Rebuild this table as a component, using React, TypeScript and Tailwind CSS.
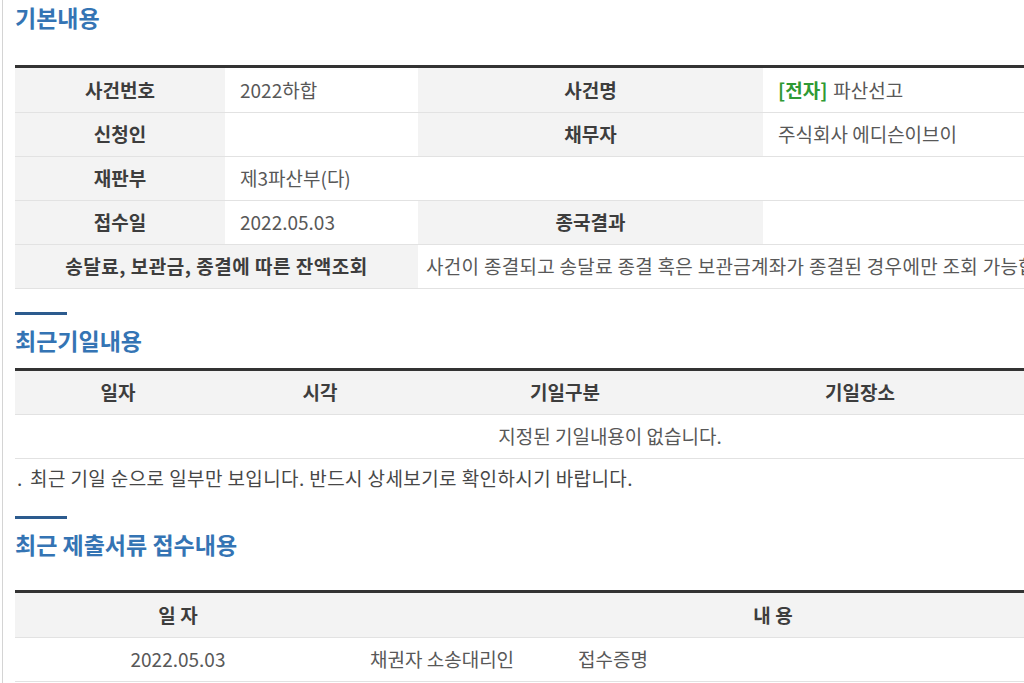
import React from "react";

const F = { fontFamily: '"Noto Sans CJK KR", "Noto Sans", sans-serif' } as const;

function Label({ w, children, className = "" }: { w: string; children?: React.ReactNode; className?: string }) {
  return (
    <div className={`${w} shrink-0 bg-[#f3f3f3] flex items-center justify-center font-bold text-[#3d3d3d] ${className}`}>
      {children}
    </div>
  );
}

function Value({ w, children, className = "" }: { w: string; children?: React.ReactNode; className?: string }) {
  return (
    <div className={`${w} shrink-0 bg-white flex items-center text-[#585858] ${className}`}>{children}</div>
  );
}

function SectionTitle({ children }: { children: React.ReactNode }) {
  return (
    <div>
      <div className="w-[52px] h-[3px] bg-[#2c5b8e]" />
      <div className="mt-[10px] h-[30px] leading-[30px] text-[23px] font-bold text-[#3474b4]">{children}</div>
    </div>
  );
}

export default function App() {
  return (
    <div className="w-[1024px] h-[683px] overflow-hidden bg-white" style={F}>
      <div className="ml-[2px] border-l border-[#d4d4d4] pl-[12px] h-full text-[19px]">
        {/* 기본내용 */}
        <div className="pt-[2px] h-[32px] leading-[30px] text-[23px] font-bold text-[#3474b4]">기본내용</div>
        <div className="mt-[33px] w-[1190px] border-t-[3px] border-[#333]">
          <div className="flex h-[45px] border-b border-[#e2e2e2]">
            <Label w="w-[210px]">사건번호</Label>
            <Value w="w-[193px]" className="pl-[15px]">2022하합</Value>
            <Label w="w-[345px]">사건명</Label>
            <Value w="w-[442px]" className="pl-[15px]">
              <span className="text-[#2f9a34] font-bold">[전자]</span>
              <span className="ml-[6px]">파산선고</span>
            </Value>
          </div>
          <div className="flex h-[44px] border-b border-[#e2e2e2]">
            <Label w="w-[210px]">신청인</Label>
            <Value w="w-[193px]" className="pl-[15px]"></Value>
            <Label w="w-[345px]">채무자</Label>
            <Value w="w-[442px]" className="pl-[15px]">주식회사 에디슨이브이</Value>
          </div>
          <div className="flex h-[44px] border-b border-[#e2e2e2]">
            <Label w="w-[210px]">재판부</Label>
            <Value w="w-[980px]" className="pl-[15px]">제3파산부(다)</Value>
          </div>
          <div className="flex h-[44px] border-b border-[#e2e2e2]">
            <Label w="w-[210px]">접수일</Label>
            <Value w="w-[193px]" className="pl-[15px]">2022.05.03</Value>
            <Label w="w-[345px]">종국결과</Label>
            <Value w="w-[442px]" className="pl-[15px]"></Value>
          </div>
          <div className="flex h-[44px] border-b border-[#e2e2e2]">
            <Label w="w-[403px]" className="tracking-[0.5px]">송달료, 보관금, 종결에 따른 잔액조회</Label>
            <Value w="w-[787px]" className="pl-[8px] whitespace-nowrap tracking-[0.3px]">
              사건이 종결되고 송달료 종결 혹은 보관금계좌가 종결된 경우에만 조회 가능합니다.
            </Value>
          </div>
        </div>

        {/* 최근기일내용 */}
        <div className="mt-[23px]">
          <SectionTitle>최근기일내용</SectionTitle>
        </div>
        <div className="mt-[13px] w-[1190px] border-t-[3px] border-[#333]">
          <div className="flex h-[44px] bg-[#f3f3f3] border-b border-[#e2e2e2] font-bold text-[#3d3d3d]">
            <div className="w-[206px] flex items-center justify-center">일자</div>
            <div className="w-[198px] flex items-center justify-center">시각</div>
            <div className="w-[292px] flex items-center justify-center">기일구분</div>
            <div className="w-[298px] flex items-center justify-center">기일장소</div>
            <div className="w-[196px]" />
          </div>
          <div className="flex h-[44px] border-b border-[#e2e2e2] items-center justify-center text-[#585858]">
            지정된 기일내용이 없습니다.
          </div>
        </div>
        <div className="mt-[4px] h-[30px] flex items-center text-[#474747]">
          <span className="w-[15px] pl-[2px]">.</span>
          <span className="tracking-[0.4px]">최근 기일 순으로 일부만 보입니다. 반드시 상세보기로 확인하시기 바랍니다.</span>
        </div>

        {/* 최근 제출서류 접수내용 */}
        <div className="mt-[23px]">
          <SectionTitle>최근 제출서류 접수내용</SectionTitle>
        </div>
        <div className="mt-[31px] w-[1190px] border-t-[3px] border-[#333]">
          <div className="flex h-[45px] bg-[#f3f3f3] border-b border-[#e2e2e2] font-bold text-[#3d3d3d]">
            <div className="w-[326px] flex items-center justify-center">일 자</div>
            <div className="w-[864px] flex items-center justify-center">내 용</div>
          </div>
          <div className="flex h-[44px] border-b border-[#e2e2e2] text-[#585858]">
            <div className="w-[326px] flex items-center justify-center">2022.05.03</div>
            <div className="w-[864px] flex items-center pl-[29px]">
              <span>채권자 소송대리인</span>
              <span className="ml-[64px]">접수증명</span>
            </div>
          </div>
        </div>
      </div>
    </div>
  );
}
